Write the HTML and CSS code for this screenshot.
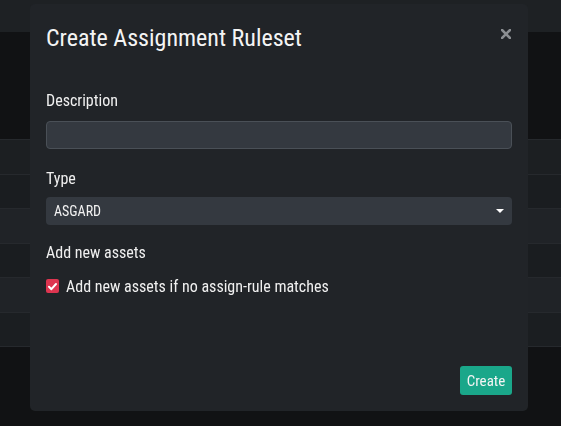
FILE: index.html
```html
<!DOCTYPE html>
<html>
<head>
<meta charset="utf-8">
<link rel="stylesheet" href="styles.css">
</head>
<body>
<div class="page">
  <div class="topbar"></div>
  <div class="gap"></div>
  <div class="rows">
    <div class="row r1"></div>
    <div class="row r2"></div>
    <div class="row r3"></div>
    <div class="row r4"></div>
    <div class="row r5"></div>
    <div class="row r6"></div>
  </div>
</div>
<div class="overlay">
  <div class="modal">
    <div class="modal-header">
      <h1 class="modal-title">Create Assignment Ruleset</h1>
      <span class="close"><svg width="10" height="10" viewBox="0 0 10 10"><path d="M1 1 L9 9 M9 1 L1 9" stroke="#8b8e92" stroke-width="2.6" stroke-linecap="square"/></svg></span>
    </div>
    <div class="modal-body">
      <div class="group g-desc">
        <label class="label lbl-desc">Description</label>
        <div class="input"></div>
      </div>
      <div class="group g-type">
        <label class="label lbl-type">Type</label>
        <div class="select"><span class="select-text">ASGARD</span><svg class="caret" width="8" height="4" viewBox="0 0 8 4"><path d="M0 0 H8 L4 4 Z" fill="#ffffff"/></svg></div>
      </div>
      <div class="group g-check">
        <label class="label lbl-check">Add new assets</label>
        <div class="check-row">
          <span class="checkbox"><svg width="13" height="13" viewBox="0 0 13 13"><path d="M3 6.8 L5.4 9.2 L10 4" stroke="#fff" stroke-width="2" fill="none" stroke-linecap="round" stroke-linejoin="round"/></svg></span>
          <span class="check-text">Add new assets if no assign-rule matches</span>
        </div>
      </div>
    </div>
    <div class="modal-footer">
      <button class="btn">Create</button>
    </div>
  </div>
</div>
</body>
</html>
```
FILE: styles.css
```css
* { box-sizing: border-box; }
html, body { margin: 0; padding: 0; }
body {
  width: 561px;
  height: 426px;
  overflow: hidden;
  background: #111214;
  font-family: "Roboto Condensed", Roboto, "Liberation Sans", sans-serif;
  color: #f1f1f1;
}
.page { display: flex; flex-direction: column; }
.topbar { height: 32px; background: #1e2124; }
.gap { height: 108px; background: #111214; border-bottom: 1px solid #26292d; }
.rows { display: flex; flex-direction: column; }
.row { height: 34.5px; border-bottom: 1px solid #26292d; }
.r1 { background: #1c1f22; }
.r2 { background: #1a1d20; }
.r3 { background: #202327; }
.r4 { background: #1a1d20; }
.r5 { background: #202327; }
.r6 { background: #1b1e21; }

.overlay {
  position: fixed;
  inset: 0;
  padding: 4px 0 0 30px;
}
.modal {
  width: 498px;
  height: 407px;
  background: #212428;
  border-radius: 5px;
  display: flex;
  flex-direction: column;
}
.modal-header {
  display: flex;
  justify-content: space-between;
  align-items: flex-start;
  padding: 20px 16px 0 16px;
}
.modal-title {
  margin: 0;
  font-size: 24px;
  font-weight: 400;
  line-height: 29px;
  color: #f4f4f4;
}
.close { display: block; margin-top: 5px; margin-right: 1px; height: 10px; }
.close svg { display: block; }
.modal-body {
  flex: 1;
  padding: 36px 16px 0 16px;
}
.group { display: flex; flex-direction: column; }
.label {
  font-size: 16px;
  line-height: 24px;
  color: #f0f0f0;
}
.lbl-desc { margin-bottom: 8px; }
.g-desc { margin-bottom: 18px; }
.lbl-type { margin-bottom: 6px; }
.g-type { margin-bottom: 16px; }
.lbl-check { margin-bottom: 9px; }
.input {
  height: 28px;
  background: #343940;
  border: 1px solid #4a5057;
  border-radius: 4px;
}
.select {
  height: 28px;
  background: #343940;
  border-radius: 4px;
  display: flex;
  align-items: center;
  justify-content: space-between;
  padding: 0 8px 0 8px;
}
.select-text { font-size: 14px; color: #f2f2f2; }
.caret { display: block; margin-right: 0; }
.check-row { display: flex; align-items: center; gap: 7px; height: 24px; }
.checkbox {
  width: 13px;
  height: 14px;
  background: #dd3550;
  border-radius: 2px;
  display: flex;
  align-items: center;
  justify-content: center;
}
.checkbox svg { display: block; }
.check-text { font-size: 16px; color: #f0f0f0; }
.modal-footer {
  display: flex;
  justify-content: flex-end;
  padding: 0 16px 16px 16px;
}
.btn {
  font-family: inherit;
  font-size: 15px;
  color: #f4f4f4;
  background: #1aa78a;
  border: none;
  border-radius: 3px;
  height: 29px;
  width: 52px;
  padding: 0;
}
```
